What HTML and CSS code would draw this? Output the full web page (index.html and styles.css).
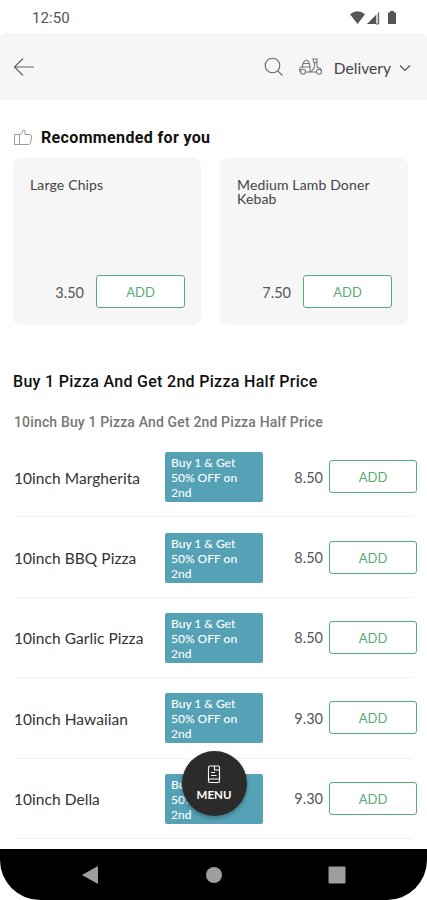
FILE: index.html
```html
<!DOCTYPE html>
<html lang="en">
<head>
    <meta charset="UTF-8">
    <meta name="viewport" content="width=device-width, initial-scale=1.0">
    <title>Order Menu</title>
    <link rel="stylesheet" href="styles.css">
</head>
<body>
    <div class="phone">
        <div class="status-bar">
            <span class="time">12:50</span>
            <svg class="status-icons" width="50" height="16" viewBox="0 0 50 16">
                <path d="M1 4.200Q8.500-1.500 16 4.200L8.500 14z" fill="#555"/>
                <path d="M30.500 1.500V14H18z" fill="#ccc"/>
                <path d="M27 5V14H18z" fill="#555"/>
                <path d="M29.500 2.500V14H27" fill="none" stroke="#666"/>
                <path d="M41 1h4v1.500h2V14h-8V2.500h2z" fill="#555"/>
            </svg>
        </div>

        <header class="top-bar">
            <svg class="back" width="22" height="20" viewBox="0 0 22 20" fill="none" stroke="#666" stroke-width="1.200">
                <path d="M10 1.500L1.500 10L10 18.500M1.500 10H21"/>
            </svg>
            <svg class="search" width="20" height="20" viewBox="0 0 20 20" fill="none" stroke="#666" stroke-width="1.100">
                <circle cx="8.500" cy="8.500" r="7.300"/>
                <path d="M13.800 13.800L18.500 18.500"/>
            </svg>
            <svg class="scooter" width="25" height="18" viewBox="0 0 25 18" fill="none" stroke="#777" stroke-width="1.100">
                <path d="M4 9L5.500 4.500Q7 1.500 9.500 2.500Q11.500 3.500 12 9.500M5.500 5.500H11M1.500 13.500Q1 9 5 9H12V14H7.500"/>
                <circle cx="5" cy="13.800" r="2.500"/>
                <path d="M15 1H19V4.500H16zM16.500 4.500V9L13 14M18.500 4.500L19.500 9.500Q23.500 10 23.500 13.500M11.500 14H18.500"/>
                <circle cx="21" cy="13.800" r="2.500"/>
            </svg>
            <span class="mode">Delivery</span>
            <svg class="chevron" width="12" height="8" viewBox="0 0 12 8" fill="none" stroke="#555" stroke-width="1.200">
                <path d="M1 1.500L6 6.500L11 1.500"/>
            </svg>
        </header>

        <main>
            <h2 class="recommended">
                <svg width="20" height="18" viewBox="0 0 20 18" fill="none" stroke="#999" stroke-width="1">
                    <path d="M1.500 5.500H6.500V15.500H1.500zM6.500 6L9.500 3.500V1.500Q11-.2 12 1.800V5.500H17.500Q18.700 6 18.500 8L17.500 14Q17 15.500 15.500 15.500H6.500"/>
                </svg>
                Recommended for you
            </h2>

            <div class="cards">
                <div class="card">
                    <p class="card-name">Large Chips</p>
                    <div class="card-buy">
                        <span class="price">3.50</span>
                        <button class="add">ADD</button>
                    </div>
                </div>
                <div class="card">
                    <p class="card-name">Medium Lamb Doner Kebab</p>
                    <div class="card-buy">
                        <span class="price">7.50</span>
                        <button class="add">ADD</button>
                    </div>
                </div>
            </div>

            <h2 class="category">Buy 1 Pizza And Get 2nd Pizza Half Price</h2>
            <h3 class="subcategory">10inch Buy 1 Pizza And Get 2nd Pizza Half Price</h3>

            <div class="item">
                <span class="name">10inch Margherita</span>
                <span class="offer">Buy 1 &amp; Get 50% OFF on 2nd</span>
                <span class="price">8.50</span>
                <button class="add">ADD</button>
            </div>
            <div class="item">
                <span class="name">10inch BBQ Pizza</span>
                <span class="offer">Buy 1 &amp; Get 50% OFF on 2nd</span>
                <span class="price">8.50</span>
                <button class="add">ADD</button>
            </div>
            <div class="item">
                <span class="name">10inch Garlic Pizza</span>
                <span class="offer">Buy 1 &amp; Get 50% OFF on 2nd</span>
                <span class="price">8.50</span>
                <button class="add">ADD</button>
            </div>
            <div class="item">
                <span class="name">10inch Hawaiian</span>
                <span class="offer">Buy 1 &amp; Get 50% OFF on 2nd</span>
                <span class="price">9.30</span>
                <button class="add">ADD</button>
            </div>
            <div class="item">
                <span class="name">10inch Della</span>
                <span class="offer">Buy 1 &amp; Get 50% OFF on 2nd</span>
                <span class="price">9.30</span>
                <button class="add">ADD</button>
            </div>
        </main>

        <button class="menu-button">
            <svg width="14" height="19" viewBox="0 0 14 19" fill="none" stroke="#fff" stroke-width="1.100">
                <path d="M3 1H11Q12.500 1 12.500 2.500V16Q12.500 17.500 11 17.500H3Q1.500 17.500 1.500 16V2.500Q1.500 1 3 1zM1.500 15.500Q1.500 14 3 14H12.500M7.500 1V5H12.500M4 7.500H8M4 10.500H9.500"/>
            </svg>
            MENU
        </button>

        <nav class="nav-bar">
            <svg width="18" height="18" viewBox="0 0 18 18" fill="#9e9e9e"><path d="M17 0V18L1 9z"/></svg>
            <svg width="18" height="18" viewBox="0 0 18 18" fill="#9e9e9e"><circle cx="9" cy="9" r="8"/></svg>
            <svg width="18" height="18" viewBox="0 0 18 18" fill="#9e9e9e"><rect x=".5" y=".5" width="17" height="17" rx="1"/></svg>
        </nav>
    </div>
</body>
</html>
```

FILE: styles.css
```css
* {
    box-sizing: border-box;
}
body {
    margin: 0;
    background-color: #fff;
    font-family: Lato, sans-serif;
    color: #444;
}
.phone {
    position: relative;
    display: flex;
    flex-direction: column;
    width: 427px;
    height: 900px;
    overflow: hidden;
}
.status-bar {
    display: flex;
    justify-content: space-between;
    align-items: center;
    height: 33px;
    padding: 3px 28px 0 32px;
}
.time {
    font-family: Roboto, sans-serif;
    font-size: 15px;
    letter-spacing: 0.1px;
    color: #555;
}
.top-bar {
    display: flex;
    align-items: center;
    height: 67px;
    padding: 0 16px 0 13px;
    background-color: #f6f6f6;
    border-radius: 6px 6px 0 0;
}
.search {
    margin-left: auto;
}
.scooter {
    margin-left: 14px;
}
.mode {
    margin: 2px 8px 0 11px;
    font-size: 15.5px;
    letter-spacing: 0.05px;
}
.chevron {
    margin-top: 2px;
}
main {
    flex: 1;
    min-height: 0;
    overflow: hidden;
}
h2, h3 {
    margin: 0;
    font-family: Roboto, sans-serif;
}
.recommended {
    display: flex;
    align-items: center;
    gap: 8px;
    margin: 28px 0 0 13px;
    font-size: 16px;
    letter-spacing: 0.35px;
    line-height: 20px;
    font-weight: 700;
    color: #111;
}
.cards {
    display: flex;
    gap: 19px;
    margin: 10px 0 0 13px;
}
.card {
    display: flex;
    flex-direction: column;
    justify-content: space-between;
    width: 188px;
    height: 167px;
    padding: 20px 16px 17px 17px;
    background-color: #f6f6f6;
    border-radius: 8px;
}
.card-name {
    margin: 0;
    font-size: 14px;
    letter-spacing: 0.15px;
    line-height: 14px;
}
.card-buy {
    display: flex;
    align-items: center;
    justify-content: flex-end;
    gap: 12px;
}
.price {
    padding-top: 1px;
    font-size: 14.5px;
    color: #555;
}
.add {
    width: 89px;
    height: 33px;
    padding: 1px 0 0;
    background-color: #fff;
    border: 1px solid #58ad75;
    border-radius: 3px;
    font-family: Lato, sans-serif;
    font-size: 13px;
    color: #58ad75;
}
.category {
    margin: 47px 0 0 13px;
    font-size: 16px;
    letter-spacing: 0.3px;
    line-height: 20px;
    font-weight: 500;
    color: #111;
}
.subcategory {
    margin: 20px 0 5px 14px;
    font-size: 14px;
    letter-spacing: 0.15px;
    line-height: 20px;
    font-weight: 500;
    color: #777;
}
.item {
    display: grid;
    grid-template-columns: 151px 98px 60px 88px;
    align-items: center;
    height: 80.4px;
    margin: 0 14px;
    border-bottom: 1px solid #f2f2f2;
}
.item .price {
    text-align: right;
}
.item .add {
    width: 88px;
    margin-left: 6px;
}
.name {
    padding-top: 2px;
    font-size: 15.5px;
    letter-spacing: 0.05px;
    color: #333;
}
.offer {
    height: 50px;
    margin-top: 1px;
    padding: 3px 15px 0 6px;
    background-color: #55a2b7;
    border-radius: 2px;
    font-size: 12px;
    line-height: 15px;
    font-weight: 500;
    color: #fff;
}
.menu-button {
    position: absolute;
    left: 182px;
    top: 751px;
    display: flex;
    flex-direction: column;
    align-items: center;
    justify-content: center;
    gap: 4px;
    width: 65px;
    height: 65px;
    padding: 0 1px 2px 0;
    background-color: #2b2b2b;
    border: none;
    border-radius: 50%;
    box-shadow: 0 2px 4px rgba(0, 0, 0, 0.3);
    font-family: Lato, sans-serif;
    font-size: 11.5px;
    font-weight: 700;
    color: #fff;
}
.nav-bar {
    display: flex;
    justify-content: space-between;
    align-items: center;
    height: 51px;
    padding: 0 81px;
    background-color: #000;
    border-radius: 0 0 40px 40px;
}
```
